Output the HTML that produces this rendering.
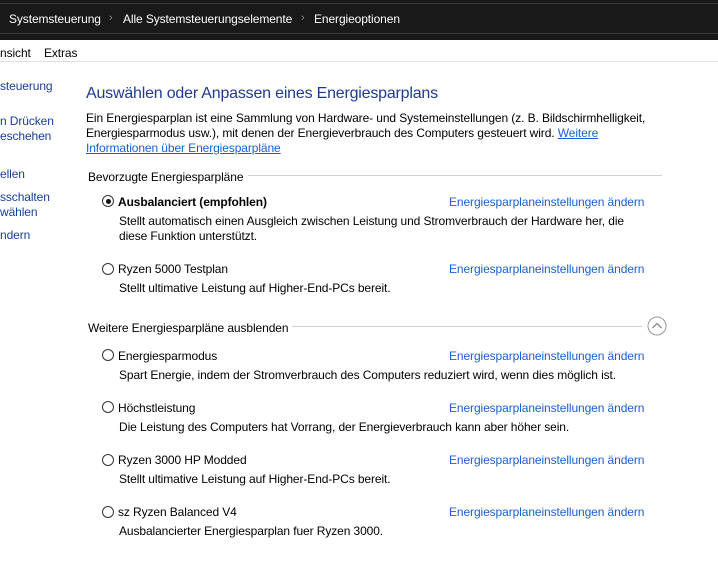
<!DOCTYPE html>
<html><head><meta charset="utf-8"><style>
*{margin:0;padding:0;box-sizing:border-box}
body{width:718px;height:563px;overflow:hidden;background:#fff;font-family:"Liberation Sans",sans-serif;font-size:12px;color:#000;position:relative;letter-spacing:-0.1px}
.a{position:absolute;white-space:nowrap}
.top{position:absolute;left:0;top:0;width:718px;height:40px;background:#191919}
.top .l1{position:absolute;left:0;top:3px;width:718px;height:1px;background:#3a3a3a}
.top .l2{position:absolute;left:0;top:33px;width:718px;height:1px;background:#3a3a3a}
.top span{position:absolute;top:12px;color:#fff;font-size:12px}
.top i{position:absolute;top:12px;color:#888;font-style:normal;font-size:11px}
.menu{position:absolute;left:0;top:61px;width:718px;height:1px;background:#e0e0e0}
.blue{color:#1a5fd6}
.side{color:#1a3d9a}
h1{position:absolute;left:86px;top:85px;font-weight:normal;font-size:16px;color:#1e3a8f;white-space:nowrap;letter-spacing:-0.2px}
.rad{position:absolute;width:12px;height:12px;border:1px solid #333;border-radius:50%;background:#fff}
.rad.on::after{content:"";position:absolute;left:2.5px;top:2.5px;width:5px;height:5px;border-radius:50%;background:#111}
.hr{position:absolute;height:1px;background:#d0d0d0}
</style></head><body>
<div class="top"><div class="l1"></div><div class="l2"></div>
<span style="left:9px">Systemsteuerung</span><i style="left:109px">›</i>
<span style="left:123px">Alle Systemsteuerungselemente</span><i style="left:301px">›</i>
<span style="left:314px">Energieoptionen</span></div>
<div class="a" style="left:0;top:46px">nsicht</div>
<div class="a" style="left:44px;top:46px">Extras</div>
<div class="menu"></div>
<div class="a side" style="left:0;top:79px">steuerung</div>
<div class="a side" style="left:0;top:114px">n Drücken</div>
<div class="a side" style="left:0;top:129px">eschehen</div>
<div class="a side" style="left:0;top:167px">ellen</div>
<div class="a side" style="left:0;top:190px">sschalten</div>
<div class="a side" style="left:0;top:205px">wählen</div>
<div class="a side" style="left:0;top:228px">ndern</div>
<h1>Auswählen oder Anpassen eines Energiesparplans</h1>
<div class="a" style="left:86px;top:111px">Ein Energiesparplan ist eine Sammlung von Hardware- und Systemeinstellungen (z. B. Bildschirmhelligkeit,</div>
<div class="a" style="left:86px;top:126px">Energiesparmodus usw.), mit denen der Energieverbrauch des Computers gesteuert wird. <u class="blue">Weitere</u></div>
<div class="a blue" style="left:86px;top:141px;text-decoration:underline">Informationen über Energiesparpläne</div>
<div class="a" style="left:88px;top:170px">Bevorzugte Energiesparpläne</div>
<div class="hr" style="left:248px;top:175px;width:414px"></div>
<div class="rad on" style="left:102px;top:195px"></div>
<div class="a" style="left:118px;top:195px;font-weight:bold">Ausbalanciert (empfohlen)</div>
<div class="a blue" style="left:449px;top:195px">Energiesparplaneinstellungen ändern</div>
<div class="a" style="left:119px;top:214px">Stellt automatisch einen Ausgleich zwischen Leistung und Stromverbrauch der Hardware her, die</div>
<div class="a" style="left:119px;top:229px">diese Funktion unterstützt.</div>
<div class="rad" style="left:102px;top:263px"></div>
<div class="a" style="left:118px;top:262px">Ryzen 5000 Testplan</div>
<div class="a blue" style="left:449px;top:262px">Energiesparplaneinstellungen ändern</div>
<div class="a" style="left:119px;top:281px">Stellt ultimative Leistung auf Higher-End-PCs bereit.</div>
<div class="a" style="left:88px;top:321px">Weitere Energiesparpläne ausblenden</div>
<div class="hr" style="left:292px;top:326px;width:350px"></div>
<svg class="a" style="left:647px;top:316px" width="20" height="20"><circle cx="10" cy="10" r="9" fill="none" stroke="#999"/><path d="M5.5 12 L10 7.5 L14.5 12" fill="none" stroke="#888" stroke-width="1.3"/></svg>
<div class="rad" style="left:102px;top:349px"></div>
<div class="a" style="left:118px;top:349px">Energiesparmodus</div>
<div class="a blue" style="left:449px;top:349px">Energiesparplaneinstellungen ändern</div>
<div class="a" style="left:119px;top:368px">Spart Energie, indem der Stromverbrauch des Computers reduziert wird, wenn dies möglich ist.</div>
<div class="rad" style="left:102px;top:401px"></div>
<div class="a" style="left:118px;top:401px">Höchstleistung</div>
<div class="a blue" style="left:449px;top:401px">Energiesparplaneinstellungen ändern</div>
<div class="a" style="left:119px;top:420px">Die Leistung des Computers hat Vorrang, der Energieverbrauch kann aber höher sein.</div>
<div class="rad" style="left:102px;top:454px"></div>
<div class="a" style="left:118px;top:453px">Ryzen 3000 HP Modded</div>
<div class="a blue" style="left:449px;top:453px">Energiesparplaneinstellungen ändern</div>
<div class="a" style="left:119px;top:472px">Stellt ultimative Leistung auf Higher-End-PCs bereit.</div>
<div class="rad" style="left:102px;top:506px"></div>
<div class="a" style="left:118px;top:505px">sz Ryzen Balanced V4</div>
<div class="a blue" style="left:449px;top:505px">Energiesparplaneinstellungen ändern</div>
<div class="a" style="left:119px;top:524px">Ausbalancierter Energiesparplan fuer Ryzen 3000.</div>
</body></html>
